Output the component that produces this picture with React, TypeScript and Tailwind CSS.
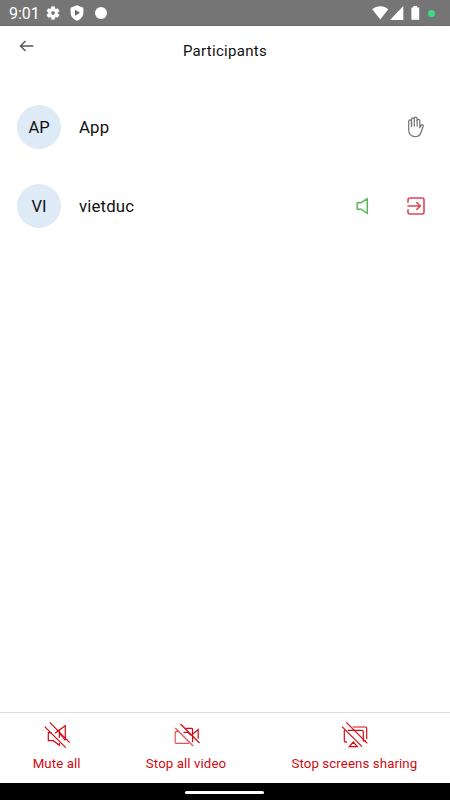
import type { ReactNode } from 'react';

function StatusBar() {
  return (
    <div className="h-[26px] bg-[#757575] border-b border-[#6a6a6a] flex items-center text-white shrink-0">
      <span className="w-[38px] ml-[9px] text-[16px] leading-[25px] pt-[2px]">9:01</span>
      <svg className="w-4 h-4 -ml-[2px]" viewBox="0 0 24 24" fill="currentColor" stroke="currentColor" strokeWidth=".5">
        <path d="M19.14 12.94c.04-.3.06-.61.06-.94s-.02-.64-.07-.94l2.03-1.58a.49.49 0 0 0 .12-.61l-1.92-3.32a.49.49 0 0 0-.59-.22l-2.39.96a7 7 0 0 0-1.62-.94l-.36-2.54a.48.48 0 0 0-.48-.41h-3.84a.48.48 0 0 0-.47.41l-.36 2.54a7.3 7.3 0 0 0-1.62.94l-2.39-.96a.48.48 0 0 0-.59.22L2.74 8.87a.48.48 0 0 0 .12.61l2.03 1.58a6 6 0 0 0 0 1.88l-2.03 1.58a.49.49 0 0 0-.12.61l1.92 3.32c.12.22.37.29.59.22l2.39-.96c.5.38 1.03.7 1.62.94l.36 2.54c.05.24.24.41.48.41h3.84c.24 0 .44-.17.47-.41l.36-2.54a7 7 0 0 0 1.62-.94l2.39.96c.22.08.47 0 .59-.22l1.92-3.32a.48.48 0 0 0-.12-.61zM12 15a3 3 0 1 1 0-6 3 3 0 0 1 0 6z" />
      </svg>
      <svg className="w-[14px] h-4 ml-[9px]" viewBox="0 0 14 16">
        <path d="M7 .3 13.4 2.8V7.6C13.4 11.6 10.7 14.5 7 15.8 3.3 14.5.6 11.6.6 7.6V2.8z" fill="white" />
        <path d="M5 4.8v6l5-3z" fill="#666" />
      </svg>
      <span className="w-3 h-3 rounded-full bg-white ml-[11px] mt-px" />
      <svg className="w-[49px] h-4 ml-auto mr-[7px]" viewBox="0 0 49 16" fill="white">
        <path d="M.2 4.2C4.8.3 11.8.3 16.3 4.2L8.3 14.6z" />
        <path d="M31.3.9v14.2H18z" />
        <path d="M39.4 2.4h2V1h3.8v1.4h2v12.3h-7.8z" />
      </svg>
      <span className="w-[7px] h-[7px] rounded-full bg-[#3ddc84] mr-[15px] mt-px" />
    </div>
  );
}

function HandIcon() {
  return (
    <svg className="w-[18px] h-[22px]" viewBox="0 0 18 22" fill="none" stroke="#777" strokeWidth="1.25" strokeLinecap="round" strokeLinejoin="round">
      <path d="M4.5 10.5V5.2a1.4 1.4 0 0 0-2.8 0v8.6c0 4.2 2.6 6.8 6.6 6.8 3.2 0 4.9-1.5 5.7-4.1l2.2-6.2c.5-1.5-1.4-2.1-2.1-.9l-1.3 2.4V4.6a1.35 1.35 0 0 0-2.7 0" />
      <path d="M4.5 5.2V3.3a1.4 1.4 0 0 1 2.8 0V10M7.3 3.3V2.4a1.4 1.4 0 0 1 2.8 0V10M4.5 5v5.5" />
    </svg>
  );
}

function SpeakerIcon() {
  return (
    <svg className="w-[13px] h-[18px]" viewBox="0 0 13 18" fill="none" stroke="#56ba58" strokeWidth="1.5" strokeLinejoin="round">
      <path d="M1.2 5.7v6.5h4l6.1 4.3V1.6L5.2 5.7z" />
    </svg>
  );
}

function LeaveIcon() {
  return (
    <svg className="w-[18px] h-[18px]" viewBox="0 0 18 18" fill="none" stroke="#df4658" strokeWidth="1.6" strokeLinecap="round" strokeLinejoin="round">
      <path d="M1 5.2V3a2 2 0 0 1 2-2h12a2 2 0 0 1 2 2v12a2 2 0 0 1-2 2H3a2 2 0 0 1-2-2v-2.2M1 9h12.3M9.8 5.7 13.4 9l-3.6 3.3" />
    </svg>
  );
}

function Participant({ initials, name, children }: { initials: string; name: string; children: ReactNode }) {
  return (
    <div className="h-[44px] flex items-center pl-[17px] pr-[25px]">
      <div className="w-[44px] h-[44px] rounded-full bg-[#deeaf6] flex items-center justify-center text-[16.5px] pt-[3px]">
        {initials}
      </div>
      <span className="ml-[18px] text-[16.8px] tracking-[0.15px] pt-[2px]">{name}</span>
      <div className="ml-auto flex items-center">{children}</div>
    </div>
  );
}

function Action({ label, children }: { label: string; children: ReactNode }) {
  return (
    <button className="flex flex-col items-center text-[#d20a11]">
      <svg className="w-7 h-7 ml-px" viewBox="0 0 28 28" fill="none" stroke="currentColor" strokeWidth="1.2">
        {children}
      </svg>
      <span className="mt-[5px] text-[13.3px] leading-5 tracking-[0.08px] whitespace-nowrap">{label}</span>
    </button>
  );
}

export default function App() {
  return (
    <div className="w-[450px] h-[800px] flex flex-col bg-white text-[#111] overflow-hidden font-[Roboto,sans-serif]">
      <StatusBar />

      <header className="h-[50px] grid grid-cols-[1fr_auto_1fr] items-center shrink-0">
        <svg className="w-[15px] h-3 ml-[19px] -mt-[10px]" viewBox="0 0 15 12" fill="none" stroke="#555" strokeWidth="1.4">
          <path d="M14.3 6H1.5M6.5 1l-5 5 5 5" />
        </svg>
        <h1 className="text-[15px] tracking-[0.3px] pt-px">Participants</h1>
      </header>

      <main className="flex-1 pt-[29px] flex flex-col gap-[35px]">
        <Participant initials="AP" name="App">
          <HandIcon />
        </Participant>
        <Participant initials="VI" name="vietduc">
          <SpeakerIcon />
          <span className="w-[38px]" />
          <LeaveIcon />
        </Participant>
      </main>

      <footer className="h-[71px] border-t border-[#ddd] pt-2 flex items-start justify-around shrink-0">
        <Action label="Mute all">
          <path d="m1.7 5.7 21 21M6.7 1.3l20 20.4" />
          <path d="M8.5 11.7H5.3v8h5l6 4.6V22M12 12.2l10.3-7.5V19M16.3 8v9M16.3 12l6 7.5" />
        </Action>
        <Action label="Stop all video">
          <path d="m2.2 7 18 18" strokeOpacity=".7" />
          <path d="m7.5 3 19 19" />
          <path d="M5.3 10.7H3q-.8 0-.8.8v10q0 .8.8.8h13.2" strokeOpacity=".7" />
          <path d="M13 7.3h5.7q.8 0 .8.8v13.2M10.5 11.3h4.5l3 3M19.5 13.3l5.7-4.8v9.2" />
        </Action>
        <Action label="Stop screens sharing">
          <path d="m1 5.7 20 20M5.3 1.3l21 21" />
          <path d="M11.7 6h12.5q1.5 0 1.5 1.5V18M6.7 9.3h14q1.6 0 1.6 1.5V20h3M3.3 9v10.5q0 1.7 2.7 1.7M12.3 21l-4 4.7h8z" />
        </Action>
      </footer>

      <div className="h-[17px] bg-black flex items-center justify-center shrink-0">
        <div className="w-[79px] h-[3px] rounded-full bg-white mt-px mr-px" />
      </div>
    </div>
  );
}
